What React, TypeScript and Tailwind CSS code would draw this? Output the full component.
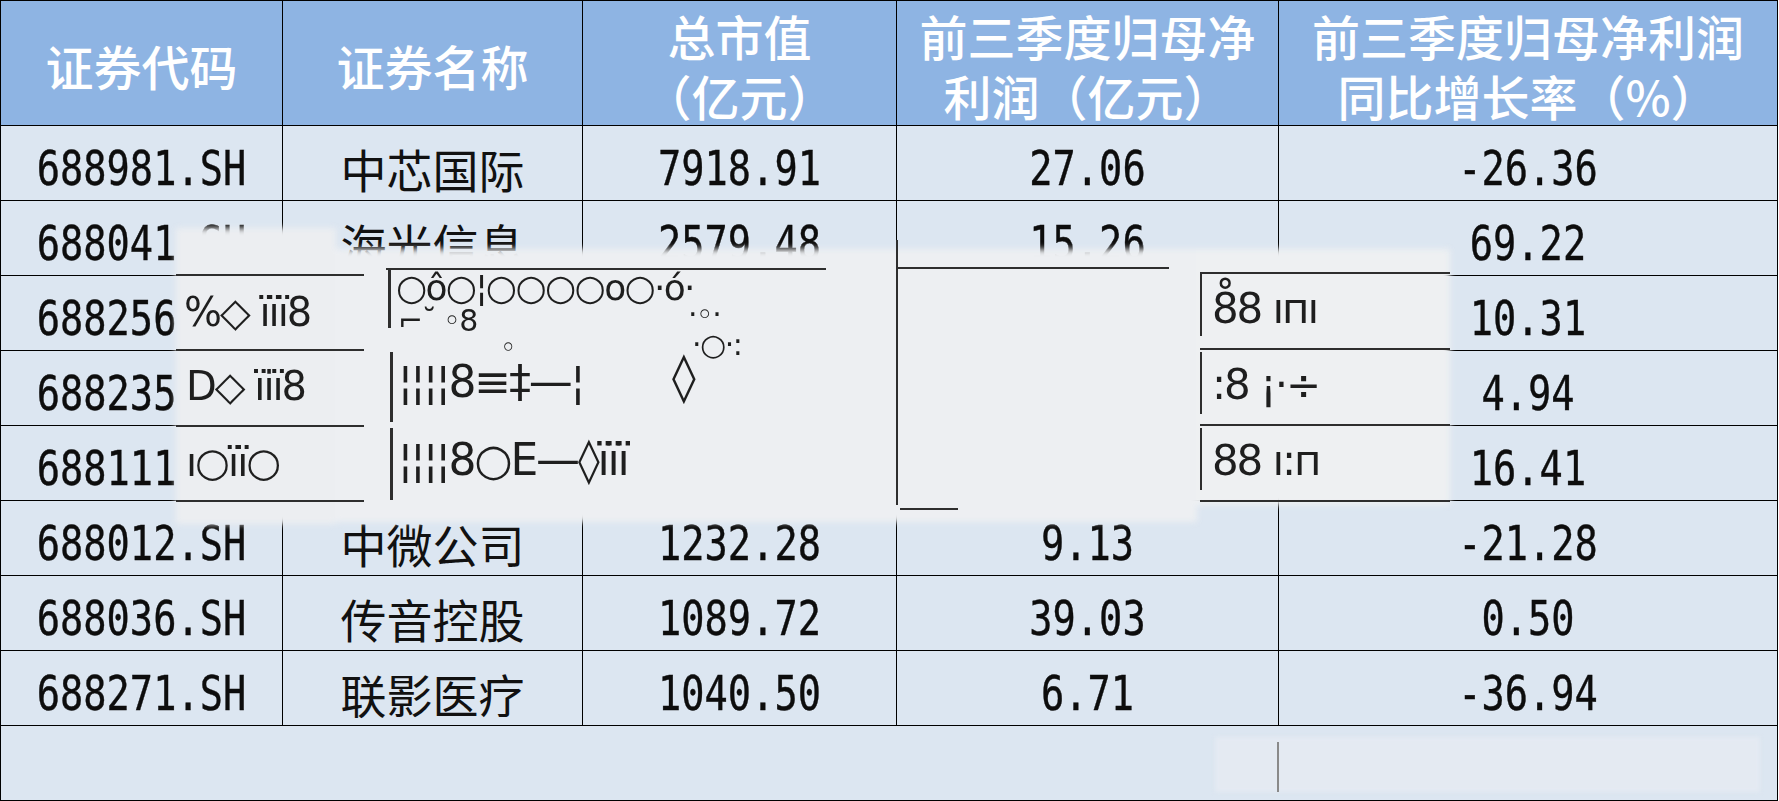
import React from "react";

type Row = {
    code: string;
    name: string;
    cap: string;
    profit: string;
    growth: string;
};

const rows: Row[] = [
    { code: "688981.SH", name: "中芯国际", cap: "7918.91", profit: "27.06", growth: "-26.36" },
    { code: "688041.SH", name: "海光信息", cap: "2579.48", profit: "15.26", growth: "69.22" },
    { code: "688256.SH", name: "", cap: "", profit: "", growth: "10.31" },
    { code: "688235.SH", name: "", cap: "", profit: "", growth: "4.94" },
    { code: "688111.SH", name: "", cap: "", profit: "", growth: "16.41" },
    { code: "688012.SH", name: "中微公司", cap: "1232.28", profit: "9.13", growth: "-21.28" },
    { code: "688036.SH", name: "传音控股", cap: "1089.72", profit: "39.03", growth: "0.50" },
    { code: "688271.SH", name: "联影医疗", cap: "1040.50", profit: "6.71", growth: "-36.94" },
];

const cjk = "font-['Noto_Sans_CJK_SC',sans-serif]";
const cell = "h-[75px] border border-black p-0 pt-[10px] text-center align-middle";

function Num({ value }: { value: string }) {
    return (
        <div className="h-[56px] scale-x-[0.84] scale-y-[1.06] overflow-visible whitespace-nowrap font-['DejaVu_Sans_Mono',monospace] text-[46px] leading-[56px] text-[#0d0d0d] [-webkit-text-stroke:0.4px_#0d0d0d]">
            {value}
        </div>
    );
}

function HeadCell({ lines }: { lines: string[] }) {
    return (
        <th className={`border border-black p-0 pt-[4px] text-center align-middle ${cjk} text-[48px] font-medium leading-[60px] text-white`}>
            {lines.map((l, i) => (
                <div key={i}>{l}</div>
            ))}
        </th>
    );
}

// smeared patch lying over the middle of the table
function Smudge() {
    const line = "absolute bg-[#2e2e2e]";
    const glyph =
        "absolute whitespace-nowrap font-['DejaVu_Sans',sans-serif] leading-none tracking-tighter text-[#1e1e1e] blur-[0.7px]";
    return (
        <div className="pointer-events-none absolute inset-0">
            <div className="absolute inset-0 blur-[3px]">
                <div className="absolute left-[176px] top-[228px] h-[296px] w-[160px] bg-[#eceef1]" />
                <div className="absolute left-[335px] top-[249px] h-[273px] w-[862px] bg-[#edeff2]" />
                <div className="absolute left-[1196px] top-[249px] h-[256px] w-[254px] bg-[#eef0f2]" />
            </div>

            {/* row lines on the left */}
            <div className={`${line} left-[176px] top-[274px] h-[2px] w-[188px]`} />
            <div className={`${line} left-[176px] top-[349px] h-[2px] w-[188px]`} />
            <div className={`${line} left-[176px] top-[425px] h-[2px] w-[188px]`} />
            <div className={`${line} left-[176px] top-[500px] h-[2px] w-[188px]`} />
            <div className={`${line} left-[386px] top-[268px] h-[2px] w-[440px]`} />
            <div className={`${line} left-[388px] top-[268px] h-[60px] w-[3px]`} />
            <div className={`${line} left-[390px] top-[352px] h-[70px] w-[3px]`} />
            <div className={`${line} left-[390px] top-[428px] h-[72px] w-[3px]`} />

            {/* middle */}
            <div className={`${line} left-[896px] top-[240px] h-[265px] w-[2px]`} />
            <div className={`${line} left-[897px] top-[267px] h-[2px] w-[272px]`} />
            <div className={`${line} left-[900px] top-[508px] h-[2px] w-[58px]`} />

            {/* boxes on the right */}
            <div className={`${line} left-[1200px] top-[272px] h-[2px] w-[250px]`} />
            <div className={`${line} left-[1200px] top-[348px] h-[2px] w-[250px]`} />
            <div className={`${line} left-[1200px] top-[424px] h-[2px] w-[250px]`} />
            <div className={`${line} left-[1200px] top-[500px] h-[2px] w-[250px]`} />
            <div className={`${line} left-[1200px] top-[272px] h-[64px] w-[2px]`} />
            <div className={`${line} left-[1200px] top-[352px] h-[62px] w-[2px]`} />
            <div className={`${line} left-[1200px] top-[428px] h-[62px] w-[2px]`} />

            <div className={`${glyph} left-[184px] top-[292px] text-[40px]`}>%◇ ïïï8</div>
            <div className={`${glyph} left-[396px] top-[270px] text-[36px]`}>○ô○¦○○○○o○·ó·</div>
            <div className={`${glyph} left-[398px] top-[306px] text-[30px]`}>⌐˘ ◦8</div>
            <div className={`${glyph} left-[500px] top-[334px] text-[28px]`}>◦</div>
            <div className={`${glyph} left-[688px] top-[300px] text-[30px]`}>·◦·</div>
            <div className={`${glyph} left-[692px] top-[330px] text-[30px]`}>·○·:</div>
            <div className={`${glyph} left-[186px] top-[366px] text-[40px]`}>D◇ ïiï8</div>
            <div className={`${glyph} left-[398px] top-[360px] text-[44px]`}>¦¦¦¦8≡‡—¦</div>
            <div className={`${glyph} left-[672px] top-[352px] text-[48px]`}>◊</div>
            <div className={`${glyph} left-[186px] top-[442px] text-[40px]`}>ı○ïï○</div>
            <div className={`${glyph} left-[398px] top-[438px] text-[44px]`}>¦¦¦¦8○E—◊ïïï</div>

            <div className={`${glyph} left-[1212px] top-[288px] text-[42px]`}>8̊8 ıпı</div>
            <div className={`${glyph} left-[1212px] top-[364px] text-[42px]`}>:8 ¡·÷</div>
            <div className={`${glyph} left-[1212px] top-[440px] text-[42px]`}>88 ı:п</div>

            {/* faint patch in the empty last row */}
            <div className="absolute left-[1215px] top-[737px] h-[55px] w-[545px] bg-[#e4eaf2] blur-[2px]" />
            <div className="absolute left-[1277px] top-[742px] h-[50px] w-[2px] bg-[#8a8a8a]" />
        </div>
    );
}

export default function App() {
    return (
        <div className="relative h-[801px] w-[1779px] overflow-hidden bg-white">
            <table className="w-[1777px] table-fixed border-collapse">
                <colgroup>
                    <col className="w-[282px]" />
                    <col className="w-[300px]" />
                    <col className="w-[314px]" />
                    <col className="w-[382px]" />
                    <col className="w-[499px]" />
                </colgroup>
                <thead>
                    <tr className="h-[123px] bg-[#8eb4e3]">
                        <HeadCell lines={["证券代码"]} />
                        <HeadCell lines={["证券名称"]} />
                        <HeadCell lines={["总市值", "（亿元）"]} />
                        <HeadCell lines={["前三季度归母净", "利润（亿元）"]} />
                        <HeadCell lines={["前三季度归母净利润", "同比增长率（%）"]} />
                    </tr>
                </thead>
                <tbody className="bg-[#dce6f1]">
                    {rows.map((r) => (
                        <tr key={r.code} className="h-[75px]">
                            <td className={cell}>
                                <Num value={r.code} />
                            </td>
                            <td className={`${cell} ${cjk} text-[46px] leading-[56px] text-[#111]`}>
                                <div className="h-[56px]">{r.name}</div>
                            </td>
                            <td className={cell}>
                                <Num value={r.cap} />
                            </td>
                            <td className={cell}>
                                <Num value={r.profit} />
                            </td>
                            <td className={cell}>
                                <Num value={r.growth} />
                            </td>
                        </tr>
                    ))}
                    <tr className="h-[75px]">
                        <td colSpan={5} className="h-[75px] border border-black p-0" />
                    </tr>
                </tbody>
            </table>
            <Smudge />
        </div>
    );
}
